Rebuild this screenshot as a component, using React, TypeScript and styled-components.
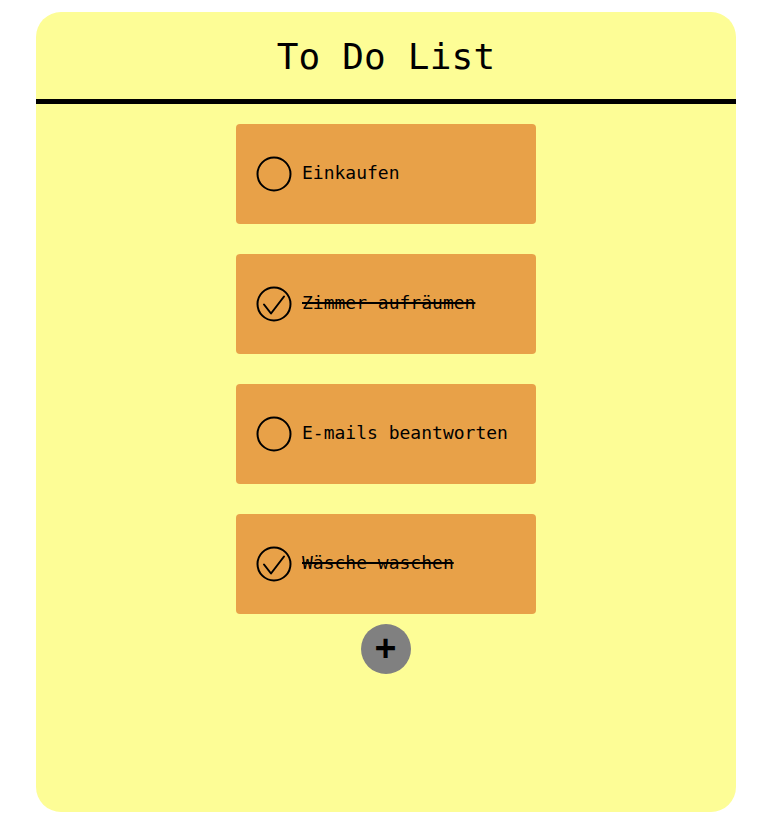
import React, { useState } from "react";
import styled, { createGlobalStyle } from "styled-components";

const GlobalStyle = createGlobalStyle`
  html, body { margin: 0; padding: 0; background: #ffffff; }
  body { font-family: "DejaVu Sans Mono", monospace; }
`;

const Page = styled.div`
  padding: 12px 0 0 36px;
`;

const Card = styled.div`
  width: 700px;
  height: 800px;
  background: #fdfd96;
  border-radius: 25px;
  display: flex;
  flex-direction: column;
  align-items: center;
  overflow: hidden;
`;

const Header = styled.header`
  align-self: stretch;
  height: 92px;
  box-sizing: border-box;
  padding-top: 2px;
  border-bottom: 5px solid #000;
  display: flex;
  align-items: center;
  justify-content: center;
`;

const Title = styled.h1`
  margin: 0;
  font-family: "DejaVu Sans Mono", monospace;
  font-weight: normal;
  font-size: 36px;
  letter-spacing: 0.2px;
  color: #000;
`;

const List = styled.ul`
  list-style: none;
  margin: 20px 0 0;
  padding: 0;
  display: flex;
  flex-direction: column;
  gap: 30px;
`;

const Item = styled.li`
  width: 300px;
  height: 100px;
  box-sizing: border-box;
  background: #e8a148;
  border-radius: 4px;
  display: flex;
  align-items: center;
  padding-left: 20px;
  gap: 10px;
  cursor: pointer;
`;

const Label = styled.span<{ $done: boolean }>`
  font-family: "DejaVu Sans Mono", monospace;
  font-size: 18px;
  color: #000;
  padding-bottom: 3px;
  text-decoration: ${(p) => (p.$done ? "line-through" : "none")};
  text-decoration-thickness: 2px;
`;

const AddButton = styled.button`
  margin-top: 10px;
  width: 50px;
  height: 50px;
  border: none;
  border-radius: 50%;
  background: #808080;
  color: #000;
  font-family: "DejaVu Sans Mono", monospace;
  font-weight: 600;
  font-size: 35px;
  line-height: 1;
  padding: 0 1px 2px 0;
  display: flex;
  align-items: center;
  justify-content: center;
  cursor: pointer;
`;

const CheckIcon = ({ done }: { done: boolean }) => (
  <svg width="36" height="36" viewBox="0 0 36 36" fill="none">
    <circle cx="18" cy="18" r="16.5" stroke="#000" strokeWidth="2" />
    {done && (
      <path
        d="M8 18.5 L15 27.5 L28 10.5"
        stroke="#000"
        strokeWidth="2"
        strokeLinecap="round"
        strokeLinejoin="round"
      />
    )}
  </svg>
);

const initial = [
  { text: "Einkaufen", done: false },
  { text: "Zimmer aufräumen", done: true },
  { text: "E-mails beantworten", done: false },
  { text: "Wäsche waschen", done: true },
];

export default function App() {
  const [todos, setTodos] = useState(initial);
  const toggle = (i: number) =>
    setTodos((t) => t.map((x, j) => (j === i ? { ...x, done: !x.done } : x)));
  return (
    <Page>
      <GlobalStyle />
      <Card>
        <Header>
          <Title>To Do List</Title>
        </Header>
        <List>
          {todos.map((t, i) => (
            <Item key={i} onClick={() => toggle(i)}>
              <CheckIcon done={t.done} />
              <Label $done={t.done}>{t.text}</Label>
            </Item>
          ))}
        </List>
        <AddButton>+</AddButton>
      </Card>
    </Page>
  );
}
